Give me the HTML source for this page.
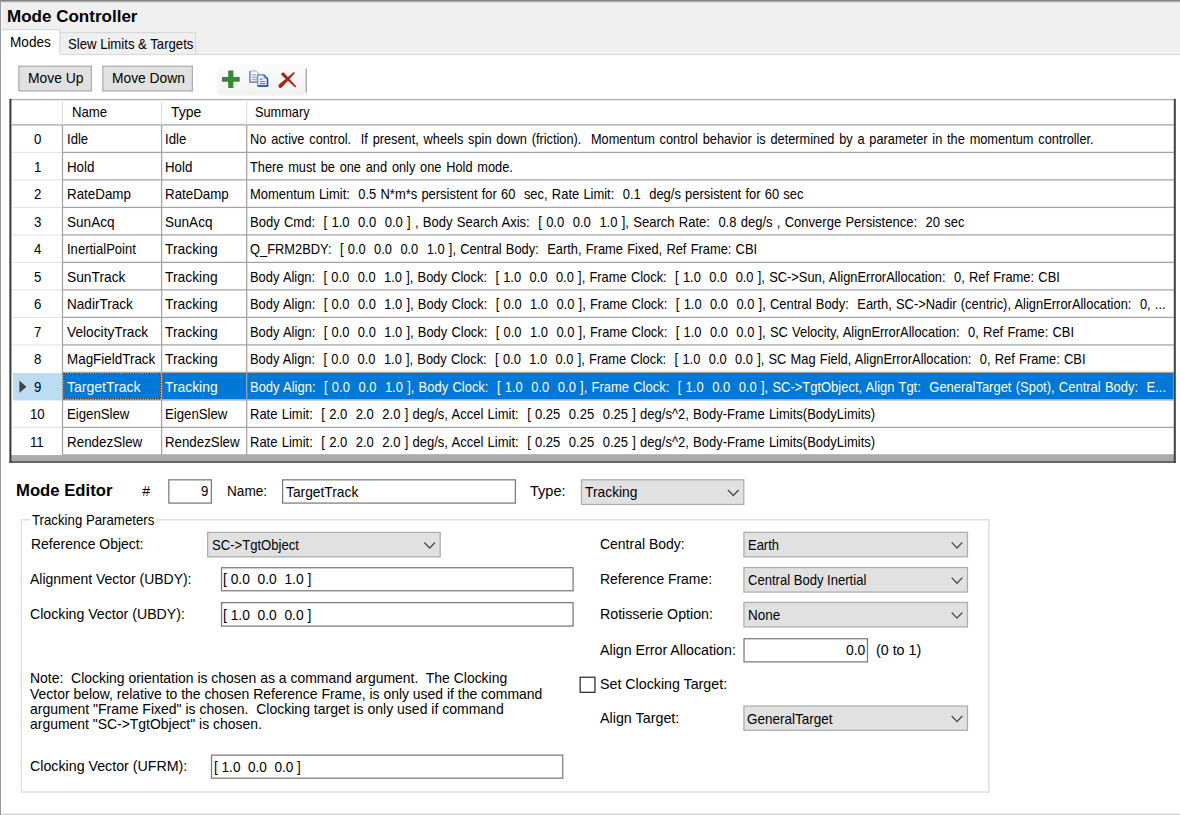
<!DOCTYPE html>
<html lang="en"><head><meta charset="utf-8"><title>Mode Controller</title>
<style>
html,body{margin:0;padding:0;background:#fff;}
body{width:1180px;height:815px;overflow:hidden;position:relative;font-family:"Liberation Sans",sans-serif;}
#bg{position:absolute;left:0;top:0;width:1180px;height:815px;display:block;}
.t{position:absolute;white-space:pre;font-size:14.1px;line-height:1;color:#000;transform-origin:0 0;display:block;margin:0;padding:0;}
.b{font-size:16.5px;font-weight:700;}
.w{color:#fff;}
</style></head><body>
<svg id="bg" width="1180" height="815" viewBox="0 0 1180 815">
<rect x="0" y="0" width="1180" height="815" fill="#ffffff" />
<rect x="0" y="2" width="1180" height="52.4" fill="#f0f0f0" />
<rect x="1.5" y="29.6" width="58.3" height="26.4" fill="#ffffff" />
<rect x="1.5" y="28.975" width="58.7" height="1.25" fill="#d9d9d9" />
<rect x="59.275" y="29.4" width="1.25" height="25.2" fill="#d9d9d9" />
<rect x="60" y="31.975" width="136" height="1.25" fill="#d9d9d9" />
<rect x="194.975" y="32.4" width="1.25" height="22.2" fill="#d9d9d9" />
<rect x="60" y="53.875" width="1120" height="1.25" fill="#dcdcdc" />
<rect x="0" y="0" width="1180" height="1.7" fill="#848484" />
<rect x="0" y="1.7" width="1180" height="0.6" fill="#b8b8b8" />
<rect x="0" y="0" width="0.95" height="815" fill="#8f8f8f" />
<rect x="0.95" y="2.3" width="0.9" height="812.7" fill="#fbfbfb" />
<rect x="1.5" y="813.6" width="1178.5" height="1.4" fill="#d4d4d4" />
<rect x="18.825" y="66.225" width="72.55" height="24.75" fill="#e1e1e1" stroke="#adadad" stroke-width="1.25" />
<rect x="102.825" y="66.225" width="89.55" height="24.75" fill="#e1e1e1" stroke="#adadad" stroke-width="1.25" />
<defs><linearGradient id="tb" x1="0" y1="0" x2="0" y2="1"><stop offset="0" stop-color="#fcfcfc"/><stop offset="1" stop-color="#f1f1f1"/></linearGradient></defs>
<rect x="217" y="63.8" width="89.6" height="31.6" rx="4.5" fill="url(#tb)"/>
<rect x="305.7" y="68.5" width="1" height="24.1" fill="#8a8a8a" />
<path d="M228.2 70.6h5.2v6.3h6.3v4.9h-6.3v6.1h-5.2v-6.1h-6.3v-4.9h6.3z" fill="#338b33"/>
<g>
<path d="M249.9 71h6.2l3.7 3.6v7.6h-9.9z" fill="#f1f5fb" stroke="#a3afc4" stroke-width="1"/>
<path d="M249.9 71.2v11h9.7" fill="none" stroke="#6f7c93" stroke-width="1.2"/>
<path d="M252 74.9h4.4M252 77.3h5.6M252 79.7h5.6" stroke="#86afe6" stroke-width="1.2"/>
<path d="M257.7 74.9h6l3.8 3.8v7.3h-9.8z" fill="#f1f6fe" stroke="#5d83c8" stroke-width="1.1"/>
<path d="M263.7 75l3.8 3.7v7.3h-9.6" fill="none" stroke="#27468f" stroke-width="1.5"/>
<path d="M263.6 75.2v3.6h3.6z" fill="#7d9fdc"/>
<path d="M259.8 79.2h2.8M259.8 81.5h5.4M259.8 83.7h5.4" stroke="#4f83d4" stroke-width="1.2"/>
</g>
<path d="M281.39 74.99 Q280.9 72.3 283.81 72.61 L296.3 86.5 L295.3 87.5 Z" fill="#a82a12"/>
<path d="M293.92 72.09 L294.95 73.11 L282.1 87.3 Q279.6 88.7 278.7 86.9 Q278.2 85.4 279.22 84.36 Z" fill="#a82a12"/>
<rect x="10.4" y="455.1" width="1164.4" height="6.7" fill="#ababab" />
<rect x="13" y="373.1" width="48.9" height="27.3" fill="#bcdcf4" />
<rect x="63.1" y="373" width="1110.5" height="26.3" fill="#0078d7" />
<rect x="10.4" y="98.95" width="1164.4" height="1.3" fill="#adadad" />
<rect x="62.5" y="124.275" width="1111.3" height="1.25" fill="#a3a3a3" />
<rect x="11.4" y="124.275" width="51.1" height="1.25" fill="#a3a3a3" />
<rect x="62.5" y="151.775" width="1111.3" height="1.25" fill="#a3a3a3" />
<rect x="11.8" y="151.9" width="50.7" height="1" fill="#e3e3e3" />
<rect x="62.5" y="179.275" width="1111.3" height="1.25" fill="#a3a3a3" />
<rect x="11.8" y="179.4" width="50.7" height="1" fill="#e3e3e3" />
<rect x="62.5" y="206.775" width="1111.3" height="1.25" fill="#a3a3a3" />
<rect x="11.8" y="206.9" width="50.7" height="1" fill="#e3e3e3" />
<rect x="62.5" y="234.275" width="1111.3" height="1.25" fill="#a3a3a3" />
<rect x="11.8" y="234.4" width="50.7" height="1" fill="#e3e3e3" />
<rect x="62.5" y="261.775" width="1111.3" height="1.25" fill="#a3a3a3" />
<rect x="11.8" y="261.9" width="50.7" height="1" fill="#e3e3e3" />
<rect x="62.5" y="289.275" width="1111.3" height="1.25" fill="#a3a3a3" />
<rect x="11.8" y="289.4" width="50.7" height="1" fill="#e3e3e3" />
<rect x="62.5" y="316.775" width="1111.3" height="1.25" fill="#a3a3a3" />
<rect x="11.8" y="316.9" width="50.7" height="1" fill="#e3e3e3" />
<rect x="62.5" y="344.275" width="1111.3" height="1.25" fill="#a3a3a3" />
<rect x="11.8" y="344.4" width="50.7" height="1" fill="#e3e3e3" />
<rect x="62.5" y="371.775" width="1111.3" height="1.25" fill="#a3a3a3" />
<rect x="62.5" y="399.275" width="1111.3" height="1.25" fill="#a3a3a3" />
<rect x="62.5" y="426.775" width="1111.3" height="1.25" fill="#a3a3a3" />
<rect x="11.8" y="426.9" width="50.7" height="1" fill="#e3e3e3" />
<rect x="62.5" y="454.275" width="1111.3" height="1.25" fill="#a3a3a3" />
<rect x="62" y="101.4" width="1" height="23.5" fill="#dcdcdc" />
<rect x="61.875" y="124.9" width="1.25" height="330" fill="#a3a3a3" />
<rect x="161.1" y="101.4" width="1" height="23.5" fill="#dcdcdc" />
<rect x="160.975" y="124.9" width="1.25" height="330" fill="#a3a3a3" />
<rect x="246.2" y="101.4" width="1" height="23.5" fill="#dcdcdc" />
<rect x="246.075" y="124.9" width="1.25" height="330" fill="#a3a3a3" />
<rect x="63.8" y="373.5" width="96.7" height="25.3" fill="none" stroke="#3a2a10" stroke-width="1.2" stroke-dasharray="1.25 1.25"/>
<rect x="63.8" y="373.5" width="96.7" height="25.3" fill="none" stroke="#ff8728" stroke-width="1.2" stroke-dasharray="1.25 1.25" stroke-dashoffset="1.25" opacity="0.85"/>
<rect x="9.4" y="98.8" width="2" height="364" fill="#383838" />
<rect x="1173.8" y="98.8" width="2" height="364" fill="#404040" />
<rect x="9.4" y="461.3" width="1166.4" height="1.5" fill="#404040" />
<path d="M19.3 380.55 L26.6 386.75 L19.3 392.95z" fill="#444" stroke="#f4f8fc" stroke-width="0.9" paint-order="stroke"/>
<rect x="168.825" y="479.825" width="42.55" height="23.25" fill="#fff" stroke="#7a7a7a" stroke-width="1.25" />
<rect x="282.625" y="479.825" width="232.75" height="23.25" fill="#fff" stroke="#7a7a7a" stroke-width="1.25" />
<rect x="581.425" y="479.825" width="162.35" height="24.65" fill="#e1e1e1" stroke="#adadad" stroke-width="1.25" />
<path d="M728 489.95 L733.3 495.55 L738.6 489.95" fill="none" stroke="#4a4a4a" stroke-width="1.35"/>
<rect x="21" y="519.15" width="9" height="1.3" fill="#dcdcdc" />
<rect x="155.5" y="519.15" width="833.9" height="1.3" fill="#dcdcdc" />
<rect x="20.75" y="519.2" width="1.3" height="273.4" fill="#dcdcdc" />
<rect x="988.15" y="519.2" width="1.3" height="273.4" fill="#dcdcdc" />
<rect x="21" y="791.35" width="968.4" height="1.3" fill="#dcdcdc" />
<rect x="207.625" y="532.425" width="232.55" height="24.45" fill="#e1e1e1" stroke="#adadad" stroke-width="1.25" />
<path d="M424.4 542.45 L429.7 548.05 L435 542.45" fill="none" stroke="#4a4a4a" stroke-width="1.35"/>
<rect x="221.525" y="567.725" width="351.55" height="23.05" fill="#fff" stroke="#7a7a7a" stroke-width="1.25" />
<rect x="221.525" y="602.625" width="351.55" height="23.45" fill="#fff" stroke="#7a7a7a" stroke-width="1.25" />
<rect x="211.525" y="755.125" width="351.25" height="23.05" fill="#fff" stroke="#7a7a7a" stroke-width="1.25" />
<rect x="743.925" y="532.325" width="223.55" height="24.55" fill="#e1e1e1" stroke="#adadad" stroke-width="1.25" />
<path d="M951.7 542.4 L957 548 L962.3 542.4" fill="none" stroke="#4a4a4a" stroke-width="1.35"/>
<rect x="743.925" y="567.525" width="223.55" height="24.55" fill="#e1e1e1" stroke="#adadad" stroke-width="1.25" />
<path d="M951.7 577.6 L957 583.2 L962.3 577.6" fill="none" stroke="#4a4a4a" stroke-width="1.35"/>
<rect x="743.925" y="602.425" width="223.55" height="24.55" fill="#e1e1e1" stroke="#adadad" stroke-width="1.25" />
<path d="M951.7 612.5 L957 618.1 L962.3 612.5" fill="none" stroke="#4a4a4a" stroke-width="1.35"/>
<rect x="744.025" y="638.725" width="123.45" height="23.15" fill="#fff" stroke="#7a7a7a" stroke-width="1.25" />
<rect x="580.15" y="677.25" width="14.8" height="15.1" fill="#fff" stroke="#333" stroke-width="1.3" />
<rect x="743.925" y="706.025" width="223.55" height="24.35" fill="#e1e1e1" stroke="#adadad" stroke-width="1.25" />
<path d="M951.7 716 L957 721.6 L962.3 716" fill="none" stroke="#4a4a4a" stroke-width="1.35"/>
</svg>
<div class="t b" style="left:6.70px;top:8.00px;transform:scaleX(1.0316);">Mode Controller</div>
<div class="t" style="left:9.80px;top:35.00px;transform:scaleX(0.9643);">Modes</div>
<div class="t" style="left:67.70px;top:37.00px;transform:scaleX(0.9326);">Slew Limits &amp; Targets</div>
<div class="t" style="left:28.30px;top:71.00px;transform:scaleX(0.9839);">Move Up</div>
<div class="t" style="left:111.80px;top:71.00px;transform:scaleX(0.9796);">Move Down</div>
<div class="t" style="left:71.50px;top:105.00px;transform:scaleX(0.9333);">Name</div>
<div class="t" style="left:170.50px;top:105.00px;transform:scaleX(0.9914);">Type</div>
<div class="t" style="left:254.90px;top:105.00px;transform:scaleX(0.9053);">Summary</div>
<div class="t" style="left:33.62px;top:132.00px;transform:scaleX(0.9380);">0</div>
<div class="t" style="left:66.60px;top:132.00px;transform:scaleX(0.9281);">Idle</div>
<div class="t" style="left:165.30px;top:132.00px;transform:scaleX(0.9369);">Idle</div>
<div class="t" style="left:249.80px;top:132.00px;word-spacing:1.4px;transform:scaleX(0.9055);">No active control.  If present, wheels spin down (friction).  Momentum control behavior is determined by a parameter in the momentum controller.</div>
<div class="t" style="left:33.62px;top:160.00px;transform:scaleX(0.9380);">1</div>
<div class="t" style="left:66.60px;top:160.00px;transform:scaleX(0.9448);">Hold</div>
<div class="t" style="left:165.30px;top:160.00px;transform:scaleX(0.9448);">Hold</div>
<div class="t" style="left:249.80px;top:160.00px;word-spacing:1.4px;transform:scaleX(0.9058);">There must be one and only one Hold mode.</div>
<div class="t" style="left:33.62px;top:187.00px;transform:scaleX(0.9380);">2</div>
<div class="t" style="left:66.60px;top:187.00px;transform:scaleX(0.9484);">RateDamp</div>
<div class="t" style="left:165.30px;top:187.00px;transform:scaleX(0.9469);">RateDamp</div>
<div class="t" style="left:249.80px;top:187.00px;word-spacing:0.7px;transform:scaleX(0.9177);">Momentum Limit:  0.5 N*m*s persistent for 60  sec, Rate Limit:  0.1  deg/s persistent for 60 sec</div>
<div class="t" style="left:33.62px;top:215.00px;transform:scaleX(0.9380);">3</div>
<div class="t" style="left:66.60px;top:215.00px;transform:scaleX(0.9641);">SunAcq</div>
<div class="t" style="left:165.30px;top:215.00px;transform:scaleX(0.9620);">SunAcq</div>
<div class="t" style="left:249.80px;top:215.00px;word-spacing:0.7px;transform:scaleX(0.9236);">Body Cmd:  [ 1.0  0.0  0.0 ] , Body Search Axis:  [ 0.0  0.0  1.0 ], Search Rate:  0.8 deg/s , Converge Persistence:  20 sec</div>
<div class="t" style="left:33.62px;top:242.00px;transform:scaleX(0.9380);">4</div>
<div class="t" style="left:66.60px;top:242.00px;transform:scaleX(0.9256);">InertialPoint</div>
<div class="t" style="left:165.30px;top:242.00px;transform:scaleX(0.9826);">Tracking</div>
<div class="t" style="left:249.80px;top:242.00px;word-spacing:0.7px;transform:scaleX(0.9131);">Q_FRM2BDY:  [ 0.0  0.0  0.0  1.0 ], Central Body:  Earth, Frame Fixed, Ref Frame: CBI</div>
<div class="t" style="left:33.62px;top:270.00px;transform:scaleX(0.9380);">5</div>
<div class="t" style="left:66.60px;top:270.00px;transform:scaleX(0.9766);">SunTrack</div>
<div class="t" style="left:165.30px;top:270.00px;transform:scaleX(0.9826);">Tracking</div>
<div class="t" style="left:249.80px;top:270.00px;word-spacing:0.7px;transform:scaleX(0.9143);">Body Align:  [ 0.0  0.0  1.0 ], Body Clock:  [ 1.0  0.0  0.0 ], Frame Clock:  [ 1.0  0.0  0.0 ], SC-&gt;Sun, AlignErrorAllocation:  0, Ref Frame: CBI</div>
<div class="t" style="left:33.62px;top:297.00px;transform:scaleX(0.9380);">6</div>
<div class="t" style="left:66.60px;top:297.00px;transform:scaleX(0.9636);">NadirTrack</div>
<div class="t" style="left:165.30px;top:297.00px;transform:scaleX(0.9826);">Tracking</div>
<div class="t" style="left:249.80px;top:297.00px;word-spacing:0.7px;transform:scaleX(0.9158);">Body Align:  [ 0.0  0.0  1.0 ], Body Clock:  [ 0.0  1.0  0.0 ], Frame Clock:  [ 1.0  0.0  0.0 ], Central Body:  Earth, SC-&gt;Nadir (centric), AlignErrorAllocation:  0, ...</div>
<div class="t" style="left:33.62px;top:325.00px;transform:scaleX(0.9380);">7</div>
<div class="t" style="left:66.60px;top:325.00px;transform:scaleX(0.9748);">VelocityTrack</div>
<div class="t" style="left:165.30px;top:325.00px;transform:scaleX(0.9826);">Tracking</div>
<div class="t" style="left:249.80px;top:325.00px;word-spacing:0.7px;transform:scaleX(0.9157);">Body Align:  [ 0.0  0.0  1.0 ], Body Clock:  [ 0.0  1.0  0.0 ], Frame Clock:  [ 1.0  0.0  0.0 ], SC Velocity, AlignErrorAllocation:  0, Ref Frame: CBI</div>
<div class="t" style="left:33.62px;top:352.00px;transform:scaleX(0.9380);">8</div>
<div class="t" style="left:66.60px;top:352.00px;transform:scaleX(0.9527);">MagFieldTrack</div>
<div class="t" style="left:165.30px;top:352.00px;transform:scaleX(0.9826);">Tracking</div>
<div class="t" style="left:249.80px;top:352.00px;word-spacing:0.7px;transform:scaleX(0.9132);">Body Align:  [ 0.0  0.0  1.0 ], Body Clock:  [ 0.0  1.0  0.0 ], Frame Clock:  [ 1.0  0.0  0.0 ], SC Mag Field, AlignErrorAllocation:  0, Ref Frame: CBI</div>
<div class="t" style="left:33.62px;top:380.00px;transform:scaleX(0.9380);">9</div>
<div class="t w" style="left:66.60px;top:380.00px;transform:scaleX(0.9961);">TargetTrack</div>
<div class="t w" style="left:165.30px;top:380.00px;transform:scaleX(0.9826);">Tracking</div>
<div class="t w" style="left:249.80px;top:380.00px;word-spacing:0.7px;transform:scaleX(0.9200);">Body Align:  [ 0.0  0.0  1.0 ], Body Clock:  [ 1.0  0.0  0.0 ], Frame Clock:  [ 1.0  0.0  0.0 ], SC-&gt;TgtObject, Align Tgt:  GeneralTarget (Spot), Central Body:  E...</div>
<div class="t" style="left:29.94px;top:407.00px;transform:scaleX(0.9380);">10</div>
<div class="t" style="left:66.60px;top:407.00px;transform:scaleX(0.9368);">EigenSlew</div>
<div class="t" style="left:165.30px;top:407.00px;transform:scaleX(0.9368);">EigenSlew</div>
<div class="t" style="left:249.80px;top:407.00px;word-spacing:0.7px;transform:scaleX(0.9225);">Rate Limit:  [ 2.0  2.0  2.0 ] deg/s, Accel Limit:  [ 0.25  0.25  0.25 ] deg/s^2, Body-Frame Limits(BodyLimits)</div>
<div class="t" style="left:30.43px;top:435.00px;transform:scaleX(0.9380);">11</div>
<div class="t" style="left:66.60px;top:435.00px;transform:scaleX(0.9515);">RendezSlew</div>
<div class="t" style="left:165.30px;top:435.00px;transform:scaleX(0.9426);">RendezSlew</div>
<div class="t" style="left:249.80px;top:435.00px;word-spacing:0.7px;transform:scaleX(0.9225);">Rate Limit:  [ 2.0  2.0  2.0 ] deg/s, Accel Limit:  [ 0.25  0.25  0.25 ] deg/s^2, Body-Frame Limits(BodyLimits)</div>
<div class="t b" style="left:16.10px;top:482.00px;transform:scaleX(1.0112);">Mode Editor</div>
<div class="t" style="left:142.30px;top:484.00px;">#</div>
<div class="t" style="left:201.14px;top:484.00px;transform:scaleX(0.9380);">9</div>
<div class="t" style="left:226.60px;top:484.00px;transform:scaleX(0.9659);">Name:</div>
<div class="t" style="left:285.50px;top:485.00px;transform:scaleX(0.9785);">TargetTrack</div>
<div class="t" style="left:530.30px;top:484.00px;transform:scaleX(1.0324);">Type:</div>
<div class="t" style="left:585.40px;top:485.00px;transform:scaleX(0.9807);">Tracking</div>
<div class="t" style="left:31.90px;top:513.00px;transform:scaleX(0.9387);">Tracking Parameters</div>
<div class="t" style="left:30.50px;top:537.00px;transform:scaleX(0.9904);">Reference Object:</div>
<div class="t" style="left:212.10px;top:538.00px;transform:scaleX(0.9283);">SC-&gt;TgtObject</div>
<div class="t" style="left:30.00px;top:572.00px;transform:scaleX(0.9913);">Alignment Vector (UBDY):</div>
<div class="t" style="left:223.30px;top:572.00px;transform:scaleX(0.9799);">[ 0.0  0.0  1.0 ]</div>
<div class="t" style="left:30.00px;top:607.00px;transform:scaleX(1.0039);">Clocking Vector (UBDY):</div>
<div class="t" style="left:223.30px;top:608.00px;transform:scaleX(0.9799);">[ 1.0  0.0  0.0 ]</div>
<div class="t" style="left:30.20px;top:671.00px;transform:scaleX(0.9894);">Note:  Clocking orientation is chosen as a command argument.  The Clocking</div>
<div class="t" style="left:30.20px;top:687.00px;transform:scaleX(0.9893);">Vector below, relative to the chosen Reference Frame, is only used if the command</div>
<div class="t" style="left:30.20px;top:702.00px;transform:scaleX(0.9933);">argument "Frame Fixed" is chosen.  Clocking target is only used if command</div>
<div class="t" style="left:30.20px;top:717.00px;transform:scaleX(0.9887);">argument "SC-&gt;TgtObject" is chosen.</div>
<div class="t" style="left:30.20px;top:759.00px;transform:scaleX(1.0093);">Clocking Vector (UFRM):</div>
<div class="t" style="left:213.80px;top:760.00px;transform:scaleX(0.9644);">[ 1.0  0.0  0.0 ]</div>
<div class="t" style="left:600.30px;top:537.00px;transform:scaleX(0.9907);">Central Body:</div>
<div class="t" style="left:747.60px;top:538.00px;transform:scaleX(0.9202);">Earth</div>
<div class="t" style="left:600.30px;top:572.00px;transform:scaleX(0.9861);">Reference Frame:</div>
<div class="t" style="left:747.50px;top:573.00px;transform:scaleX(0.9264);">Central Body Inertial</div>
<div class="t" style="left:600.30px;top:607.00px;transform:scaleX(1.0079);">Rotisserie Option:</div>
<div class="t" style="left:747.60px;top:608.00px;transform:scaleX(0.9554);">None</div>
<div class="t" style="left:600.30px;top:643.00px;transform:scaleX(1.0085);">Align Error Allocation:</div>
<div class="t" style="left:845.70px;top:643.00px;transform:scaleX(0.9850);">0.0</div>
<div class="t" style="left:875.90px;top:643.00px;transform:scaleX(1.0122);">(0 to 1)</div>
<div class="t" style="left:600.10px;top:677.00px;transform:scaleX(1.0097);">Set Clocking Target:</div>
<div class="t" style="left:600.30px;top:711.00px;transform:scaleX(1.0154);">Align Target:</div>
<div class="t" style="left:747.10px;top:712.00px;transform:scaleX(0.9584);">GeneralTarget</div>
</body></html>
